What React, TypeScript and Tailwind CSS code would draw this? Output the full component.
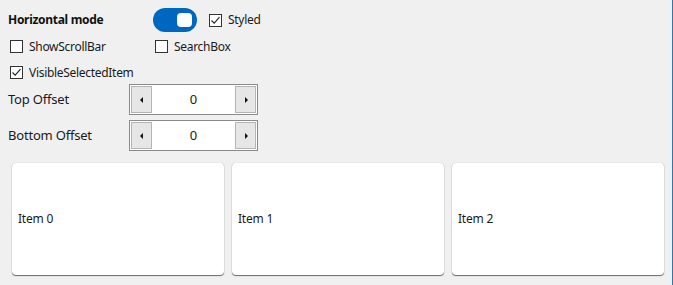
import { useState } from 'react';

const font = { fontFamily: '"Segoe UI", "Noto Sans", "Open Sans", sans-serif' };

function CheckBox({ label, checked }: { label: string; checked?: boolean }) {
  return (
    <div className="flex items-center h-[13px]">
      <div className="w-[13px] h-[13px] border border-[#333333] bg-white flex items-center justify-center">
        {checked && (
          <svg width="11" height="11" viewBox="0 0 11 11">
            <path d="M1.5 5.5 L4.2 8.2 L9.5 2.2" fill="none" stroke="#222" strokeWidth="1.1" />
          </svg>
        )}
      </div>
      <span className="ml-[6px] text-[12px] text-[#1a1a1a] leading-none tracking-[-0.3px]">{label}</span>
    </div>
  );
}

function NumericBox({ value }: { value: number }) {
  return (
    <div className="w-[129px] h-[31px] border border-[#8a8a8a] bg-white p-[1px] flex">
      <div className="w-[21px] h-full border border-[#b4b4b4] bg-[#e6e6e6] flex items-center justify-center">
        <svg width="4" height="6" viewBox="0 0 4 6">
          <path d="M3 0 L0 3 L3 6 Z" fill="#111" />
        </svg>
      </div>
      <div className="flex-1 flex items-center justify-center text-[13px] text-[#1a1a1a]">{value}</div>
      <div className="w-[21px] h-full border border-[#b4b4b4] bg-[#e6e6e6] flex items-center justify-center">
        <svg width="4" height="6" viewBox="0 0 4 6">
          <path d="M1 0 L4 3 L1 6 Z" fill="#111" />
        </svg>
      </div>
    </div>
  );
}

export default function App() {
  const [on] = useState(true);
  const items = ['Item 0', 'Item 1', 'Item 2'];

  return (
    <div
      className="w-[673px] h-[285px] bg-[#f0f0f0] border-r border-[#2a78b4] flex flex-col pl-[8px] pt-[8px] overflow-hidden"
      style={font}
    >
      {/* Row 1 */}
      <div className="flex items-center h-[24px]">
        <span className="w-[145px] text-[12px] font-bold text-[#111] tracking-[-0.3px]">Horizontal mode</span>
        <div className={`w-[44px] h-[24px] rounded-full flex items-center justify-end pr-[5px] ${on ? 'bg-[#0067c0]' : 'bg-gray-400'}`}>
          <div className="w-[15px] h-[14px] rounded-[4px] bg-white" />
        </div>
        <div className="ml-[12px]">
          <CheckBox label="Styled" checked />
        </div>
      </div>

      {/* Row 2 */}
      <div className="flex items-center mt-[8px] ml-[2px]">
        <div className="w-[145px]">
          <CheckBox label="ShowScrollBar" />
        </div>
        <CheckBox label="SearchBox" />
      </div>

      {/* Row 3 */}
      <div className="flex items-center mt-[13px] ml-[2px]">
        <CheckBox label="VisibleSelectedItem" checked />
      </div>

      {/* Offsets */}
      <div className="flex items-center mt-[5px]">
        <span className="w-[121px] text-[13px] text-[#1a1a1a] tracking-[-0.2px]">Top Offset</span>
        <NumericBox value={0} />
      </div>
      <div className="flex items-center mt-[5px]">
        <span className="w-[121px] text-[13px] text-[#1a1a1a] tracking-[-0.2px]">Bottom Offset</span>
        <NumericBox value={0} />
      </div>

      {/* Cards */}
      <div className="flex gap-[8px] mt-[12px] ml-[4px]">
        {items.map((it) => (
          <div
            key={it}
            className="w-[212px] h-[112px] bg-white rounded-[4px] shadow-[0_1px_1px_rgba(0,0,0,0.55),0_0_1px_rgba(0,0,0,0.3)] flex items-center pl-[6px] text-[12px] text-[#1a1a1a] tracking-[-0.2px]"
          >
            {it}
          </div>
        ))}
      </div>
    </div>
  );
}
